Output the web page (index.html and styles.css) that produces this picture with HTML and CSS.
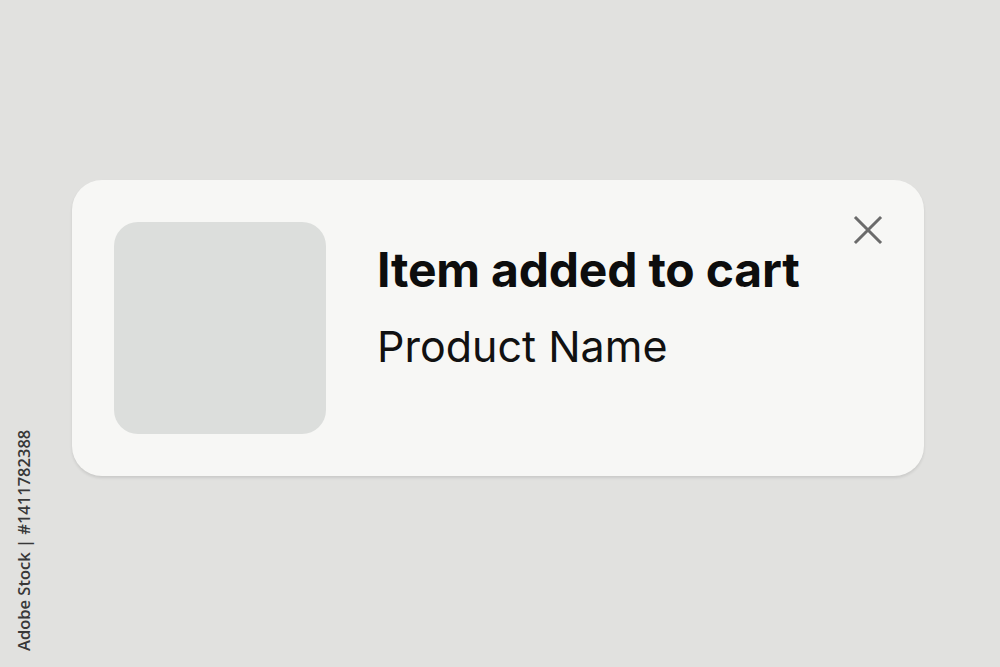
FILE: index.html
```html
<!DOCTYPE html>
<html lang="en">
<head>
<meta charset="utf-8">
<title>Item added to cart</title>
<link rel="stylesheet" href="styles.css">
</head>
<body>
<main class="stage">
  <section class="toast">
    <div class="thumb"></div>
    <div class="info">
      <h1 class="title">Item added to cart</h1>
      <p class="name">Product Name</p>
    </div>
    <button class="close" aria-label="Close">
      <svg width="30" height="30" viewBox="0 0 30 30" fill="none" stroke="#6b6b6b" stroke-width="3" stroke-linecap="square">
        <path d="M3 3L27 27M27 3L3 27"/>
      </svg>
    </button>
  </section>
</main>
<div class="stamp">Adobe Stock | #1411782388</div>
</body>
</html>
```
FILE: styles.css
```css
html, body {
  margin: 0;
  padding: 0;
}
body {
  width: 1000px;
  height: 667px;
  background: #e1e1df;
  font-family: Inter, "Noto Sans", sans-serif;
  overflow: hidden;
  position: relative;
}
.stage {
  padding: 180px 76px 0 72px;
}
.toast {
  display: flex;
  align-items: flex-start;
  background: #f7f7f5;
  border-radius: 30px;
  height: 296px;
  box-sizing: border-box;
  padding: 42px 41px 42px 42px;
  box-shadow: 0 2px 3px rgba(0,0,0,0.10);
}
.thumb {
  width: 212px;
  height: 212px;
  flex: none;
  background: #dcdedc;
  border-radius: 24px;
}
.info {
  flex: 1;
  padding: 24px 0 0 51px;
}
.title {
  margin: 0;
  font-size: 48px;
  line-height: 1;
  font-weight: 700;
  color: #0d0d0d;
  letter-spacing: -0.2px;
}
.name {
  margin: 31px 0 0;
  font-size: 43px;
  line-height: 1;
  font-weight: 400;
  color: #111;
}
.close {
  flex: none;
  margin-top: -7px;
  padding: 0;
  border: 0;
  background: none;
  width: 30px;
  height: 30px;
  display: block;
}
.close svg {
  display: block;
}
.stamp {
  position: absolute;
  left: 12px;
  top: 428px;
  height: 224px;
  writing-mode: vertical-rl;
  transform: rotate(180deg);
  font-family: "Open Sans", sans-serif;
  font-size: 16.5px;
  font-weight: 600;
  color: #383838;
  text-align: center;
  white-space: nowrap;
}
```
